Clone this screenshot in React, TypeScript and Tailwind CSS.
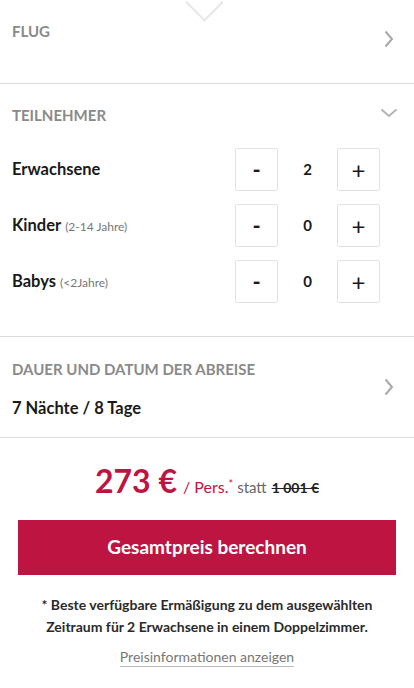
import { useState } from 'react';

const font = { fontFamily: 'Lato, "Open Sans", sans-serif' };

function ChevronRight() {
  return (
    <svg width="10" height="18" viewBox="0 0 10 18" fill="none" className="shrink-0">
      <path d="M1.5 1.5 L8 9 L1.5 16.5" stroke="#a8a8a8" strokeWidth="2" />
    </svg>
  );
}

function ChevronDown() {
  return (
    <svg width="18" height="10" viewBox="0 0 18 10" fill="none" className="shrink-0">
      <path d="M1.5 1.5 L9 8 L16.5 1.5" stroke="#b4b4b4" strokeWidth="2" />
    </svg>
  );
}

function Counter({ label, hint, value }: { label: string; hint?: string; value: number }) {
  const [count, setCount] = useState(value);
  return (
    <div className="flex items-center justify-between h-[43px]">
      <div className="flex items-baseline gap-1">
        <span className="text-[16.5px] font-bold text-[#1a1a1a]">{label}</span>
        {hint && <span className="text-[12px] text-[#777]">{hint}</span>}
      </div>
      <div className="flex items-center">
        <button
          onClick={() => setCount(Math.max(0, count - 1))}
          className="w-[43px] h-[43px] border border-[#e2e2e2] rounded-[2px] flex items-center justify-center text-[22px] font-bold text-[#1a1a1a]"
        >
          -
        </button>
        <span className="w-[59px] text-center text-[15px] font-bold text-[#1a1a1a]">{count}</span>
        <button
          onClick={() => setCount(count + 1)}
          className="w-[43px] h-[43px] border border-[#e2e2e2] rounded-[2px] flex items-center justify-center text-[24px] text-[#1a1a1a]"
        >
          +
        </button>
      </div>
    </div>
  );
}

export default function App() {
  return (
    <div className="w-[414px] bg-white" style={font}>
      {/* Flug */}
      <div className="relative h-[83px] px-3 pt-[22px] flex justify-between items-start">
        <div className="absolute left-[191px] -top-[11px] w-[27px] h-[27px] rotate-45 border-r-2 border-b-2 border-[#e6e6e6]"></div>
        <span className="text-[15px] leading-[18px] font-bold uppercase text-[#8a8a8a]">Flug</span>
        <div className="mt-[8px] mr-[8px]">
          <ChevronRight />
        </div>
      </div>

      {/* Teilnehmer */}
      <div className="border-t border-[#dcdcdc] px-3 pt-[22px] pb-[33px]">
        <div className="flex justify-between items-start">
          <span className="text-[15px] leading-[18px] font-bold uppercase text-[#8a8a8a]">Teilnehmer</span>
          <div className="mt-[2px] mr-[4px]">
            <ChevronDown />
          </div>
        </div>
        <div className="mt-[24px] pr-[22px] flex flex-col gap-[13px]">
          <Counter label="Erwachsene" value={2} />
          <Counter label="Kinder" hint="(2-14 Jahre)" value={0} />
          <Counter label="Babys" hint="(<2Jahre)" value={0} />
        </div>
      </div>

      {/* Dauer */}
      <div className="border-t border-[#dcdcdc] px-3 pt-[23px] pb-[19px] flex justify-between items-center">
        <div>
          <div className="text-[15px] leading-[18px] font-bold uppercase text-[#8a8a8a]">Dauer und Datum der Abreise</div>
          <div className="mt-[20px] text-[16.5px] leading-[20px] font-bold text-[#1a1a1a]">7 Nächte / 8 Tage</div>
        </div>
        <div className="mr-[8px] mt-[-4px]">
          <ChevronRight />
        </div>
      </div>

      {/* Preis */}
      <div className="border-t border-[#dcdcdc] pt-[24px] pb-6 px-[18px]">
        <div className="flex items-baseline justify-center">
          <span className="text-[32px] leading-[38px] font-bold text-[#be1442]">273 €</span>
          <span className="ml-[6px] text-[16px] text-[#be1442]">/ Pers.<sup className="text-[11px]">*</sup></span>
          <span className="ml-1 text-[15px] text-[#666]">statt</span>
          <span className="ml-[5px] text-[14px] font-bold text-[#222] line-through">1 001 €</span>
        </div>
        <button className="mt-[20px] w-full h-[55px] bg-[#be1442] text-white text-[19px] font-bold">
          Gesamtpreis berechnen
        </button>
        <p className="mt-[19px] text-center text-[14px] leading-[22px] font-bold text-[#2a2a2a]">
          * Beste verfügbare Ermäßigung zu dem ausgewählten
          <br />
          Zeitraum für 2 Erwachsene in einem Doppelzimmer.
        </p>
        <div className="mt-[6px] text-center">
          <a className="text-[14px] text-[#777] border-b border-[#bbb] pb-[1px]">Preisinformationen anzeigen</a>
        </div>
      </div>
    </div>
  );
}
